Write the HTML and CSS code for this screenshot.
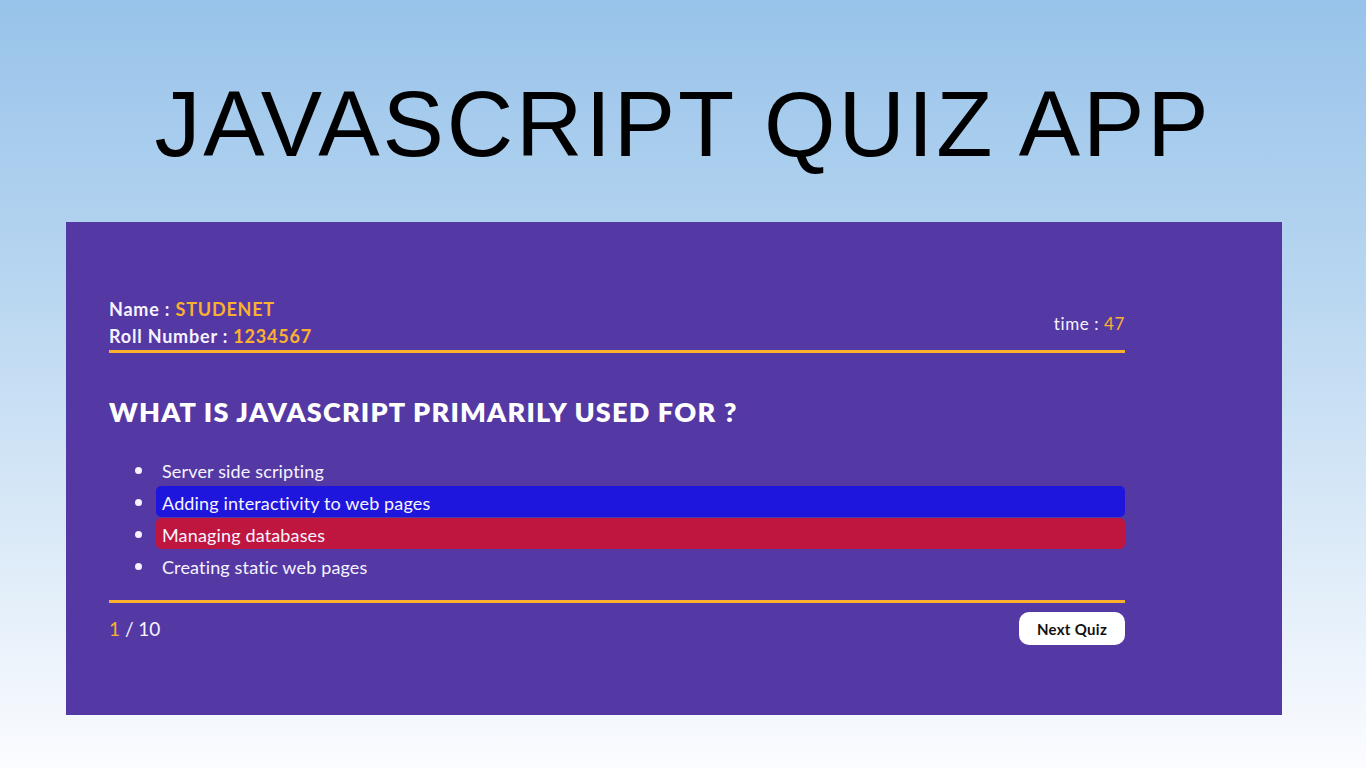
FILE: index.html
```html
<!DOCTYPE html>
<html lang="en">
<head>
<meta charset="utf-8">
<title>JavaScript Quiz App</title>
<link rel="stylesheet" href="styles.css">
</head>
<body>
  <h1 class="title">JAVASCRIPT QUIZ APP</h1>
  <main class="card">
    <header class="info">
      <div class="student">
        <div class="line">Name : <span class="accent">STUDENET</span></div>
        <div class="line">Roll Number : <span class="accent">1234567</span></div>
      </div>
      <div class="timer">time : <span class="accent">47</span></div>
    </header>
    <h2 class="question">WHAT IS JAVASCRIPT PRIMARILY USED FOR ?</h2>
    <ul class="options">
      <li class="option">Server side scripting</li>
      <li class="option selected">Adding interactivity to web pages</li>
      <li class="option wrong">Managing databases</li>
      <li class="option">Creating static web pages</li>
    </ul>
    <footer class="footer">
      <div class="progress"><span class="accent">1</span> / 10</div>
      <button class="next">Next Quiz</button>
    </footer>
  </main>
</body>
</html>
```
FILE: styles.css
```css
* { box-sizing: border-box; }
html, body { margin: 0; padding: 0; }
body {
  min-height: 768px;
  background: linear-gradient(to bottom, #98c3ea 0%, #b6d5f0 35%, #e6f0fa 80%, #fbfcff 100%);
  font-family: "Lato", "Noto Sans", sans-serif;
  overflow: hidden;
}
.title {
  margin: 0;
  padding-top: 71px;
  height: 222px;
  text-align: center;
  font-family: "Liberation Sans", Arial, sans-serif;
  font-weight: 400;
  font-size: 92px;
  line-height: 106px;
  letter-spacing: 2.9px;
  color: #000;
}
.card {
  margin-left: 66px;
  width: 1216px;
  height: 493px;
  background: #5439a5;
  padding: 74px 157px 0 43px;
  color: #f7f3ff;
}
.info {
  display: flex;
  justify-content: space-between;
  align-items: center;
  border-bottom: 3px solid #fbb12e;
}
.student .line {
  font-size: 18px;
  font-weight: 700;
  line-height: 27px;
  letter-spacing: 0.8px;
}
.accent { color: #fbb12e; }
.timer {
  font-size: 17px;
  line-height: 27px;
  letter-spacing: 0.6px;
}
.question {
  margin: 42px 0 0;
  font-size: 27px;
  line-height: 34px;
  font-weight: 800;
  letter-spacing: 1.2px;
  color: #fff;
}
.options {
  margin: 25px 0 0;
  padding-left: 47px;
  list-style: disc;
}
.option {
  font-size: 18px;
  line-height: 32px;
  height: 32px;
  padding-left: 6px;
  border-radius: 5px;
  letter-spacing: 0.15px;
}
.option::marker { font-size: 21px; }
.option.selected { background: #1e16dc; height: 31px; line-height: 31px; margin-bottom: 1px; }
.option.wrong { background: #bf1640; height: 31px; line-height: 31px; margin-bottom: 1px; }
.footer {
  margin-top: 18px;
  border-top: 3px solid #fbb12e;
  padding-top: 9px;
  display: flex;
  justify-content: space-between;
  align-items: center;
}
.progress {
  font-size: 19px;
}
.next {
  width: 106px;
  height: 33px;
  border: none;
  border-radius: 10px;
  background: #fff;
  color: #111;
  font-family: "Lato", "Noto Sans", sans-serif;
  font-weight: 700;
  font-size: 15px;
  letter-spacing: 0.3px;
  padding: 0;
}
```
